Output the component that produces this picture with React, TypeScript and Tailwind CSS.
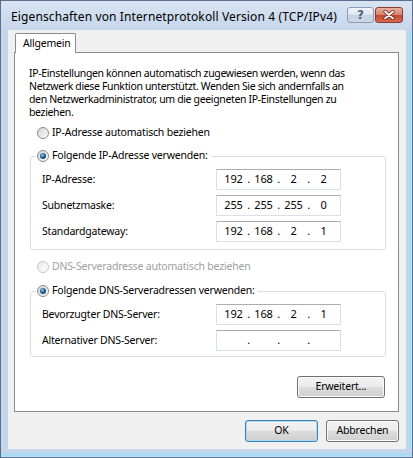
import React from "react";

function Radio({ checked, disabled, id }: { checked?: boolean; disabled?: boolean; id: string }) {
  return (
    <svg width="12" height="12" viewBox="0 0 12 12" className="shrink-0">
      <defs>
        <linearGradient id={`rf-${id}`} x1="0" y1="0" x2="1" y2="1">
          <stop offset="0" stopColor={disabled ? "#e8e8e8" : "#d2d2d2"} />
          <stop offset="1" stopColor="#ffffff" />
        </linearGradient>
        <radialGradient id={`rd-${id}`} cx="0.4" cy="0.35" r="0.7">
          <stop offset="0" stopColor="#8fd0f4" />
          <stop offset="0.5" stopColor="#2b6ea6" />
          <stop offset="1" stopColor="#0e2f52" />
        </radialGradient>
      </defs>
      <circle cx="6" cy="6" r="5.5" fill={`url(#rf-${id})`} stroke={disabled ? "#c6c6c6" : "#8a8a8a"} strokeWidth="1" />
      {checked && <circle cx="6" cy="6" r="3" fill={`url(#rd-${id})`} />}
    </svg>
  );
}

function IpField({ v }: { v: string[] }) {
  return (
    <div className="w-[125px] h-[21px] bg-white border border-[#dbdfe6] border-t-[#abadb3] flex items-center pl-[4px] shrink-0 text-[11px]">
      {v.map((o, i) => (
        <React.Fragment key={i}>
          {i > 0 && <span className="w-[5px] text-center">.</span>}
          <span className="w-[25px] text-center">{o}</span>
        </React.Fragment>
      ))}
    </div>
  );
}

function Row({ label, v }: { label: string; v: string[] }) {
  return (
    <div className="flex items-center h-[21px] pl-[6px]">
      <span className="w-[174px] shrink-0">{label}</span>
      <IpField v={v} />
    </div>
  );
}

function Btn({ children, def, w }: { children: React.ReactNode; def?: boolean; w: string }) {
  return (
    <div
      className={`${w} h-[22px] rounded-[3px] border flex items-center justify-center bg-[linear-gradient(#f2f2f2_0%,#ebebeb_50%,#dddddd_50%,#cfcfcf_100%)] ${
        def
          ? "border-[#3c7fb1] shadow-[inset_0_0_0_1px_#a9dcf3]"
          : "border-[#707070] shadow-[inset_0_0_0_1px_#fbfbfb]"
      }`}
    >
      {children}
    </div>
  );
}

export default function App() {
  return (
    <div className="w-[413px] h-[458px] border border-[#5b6f8e] bg-[#c4d5ec] flex flex-col [font-family:'Noto_Sans',sans-serif] text-[10.5px] tracking-[-0.2px] text-black overflow-hidden">
      {/* Title bar */}
      <div className="h-[29px] flex shrink-0 bg-[linear-gradient(#d9e4f2,#c6d6ec)]">
        <div className="mt-[9px] ml-[10px] text-[12px] tracking-[0.12px] leading-[14px] text-black">
          Eigenschaften von Internetprotokoll Version 4 (TCP/IPv4)
        </div>
        <div className="flex-1" />
        <div className="mt-[6px] mr-[9px] flex gap-[1px]">
          <div className="w-[27px] h-[16px] rounded-[3px] border border-[#8a9cb6] bg-[linear-gradient(#f1f5fa_0%,#dbe4ef_50%,#c5d2e3_50%,#cdd9e8_100%)] flex items-center justify-center">
            <span className="text-[12px] font-bold leading-none text-[#4f6179] [font-family:'DejaVu_Sans',sans-serif]">?</span>
          </div>
          <div className="w-[28px] h-[16px] rounded-[3px] border border-[#8d3a2d] bg-[linear-gradient(#eab0a2_0%,#d8806b_50%,#c5452d_50%,#d66a4f_100%)] flex items-center justify-center">
            <svg width="12" height="10" viewBox="0 0 12 10">
              <path d="M2 1.5 L10 8.5 M10 1.5 L2 8.5" stroke="#5a1a10" strokeWidth="3.2" strokeLinecap="round" />
              <path d="M2 1.5 L10 8.5 M10 1.5 L2 8.5" stroke="#ffffff" strokeWidth="1.8" strokeLinecap="round" />
            </svg>
          </div>
        </div>
      </div>

      <div className="flex flex-1">
        <div className="w-[7px] shrink-0 bg-[#c4d5ec]" />
        {/* Body */}
        <div className="w-[398px] shrink-0 bg-[#f0f0f0] flex flex-col pt-[3px]">
          {/* Tab */}
          <div className="flex">
            <div className="ml-[7px] w-[61px] h-[20px] -mb-px relative z-10 bg-white border border-b-0 border-[#898c95] rounded-t-[2px] flex items-center pl-[7px]">
              Allgemein
            </div>
          </div>
          {/* Panel */}
          <div className="ml-[6px] w-[385px] h-[360px] bg-white border border-[#898c95] flex flex-col">
            <p className="pl-[14px] pt-[14px] leading-[13px] tracking-[-0.35px]">
              IP-Einstellungen können automatisch zugewiesen werden, wenn das
              <br />
              Netzwerk diese Funktion unterstützt. Wenden Sie sich andernfalls an
              <br />
              den Netzwerkadministrator, um die geeigneten IP-Einstellungen zu
              <br />
              beziehen.
            </p>

            <div className="mt-[6px] h-[16px] pl-[22px] flex items-center gap-[3px]">
              <Radio id="a" />
              <span>IP-Adresse automatisch beziehen</span>
            </div>

            <fieldset className="mt-[7px] ml-[15px] w-[356px] border border-[#d5dfe5] rounded-[3px] pl-[5px] pb-[7px]">
              <legend className="h-[16px] px-[1px] pr-[3px]">
                <span className="flex items-center gap-[3px] h-[16px]">
                  <Radio id="b" checked />
                  <span>Folgende IP-Adresse verwenden:</span>
                </span>
              </legend>
              <div className="pt-[5px] flex flex-col gap-[5px]">
                <Row label="IP-Adresse:" v={["192", "168", "2", "2"]} />
                <Row label="Subnetzmaske:" v={["255", "255", "255", "0"]} />
                <Row label="Standardgateway:" v={["192", "168", "2", "1"]} />
              </div>
            </fieldset>

            <div className="mt-[9px] h-[16px] pl-[22px] flex items-center gap-[3px] text-[#a0a0a0]">
              <Radio id="c" disabled />
              <span>DNS-Serveradresse automatisch beziehen</span>
            </div>

            <fieldset className="mt-[8px] ml-[15px] w-[356px] border border-[#d5dfe5] rounded-[3px] pl-[5px] pb-[5px]">
              <legend className="h-[16px] px-[1px] pr-[3px]">
                <span className="flex items-center gap-[3px] h-[16px]">
                  <Radio id="d" checked />
                  <span>Folgende DNS-Serveradressen verwenden:</span>
                </span>
              </legend>
              <div className="pt-[5px] flex flex-col gap-[5px]">
                <Row label="Bevorzugter DNS-Server:" v={["192", "168", "2", "1"]} />
                <Row label="Alternativer DNS-Server:" v={["", "", "", ""]} />
              </div>
            </fieldset>

            <div className="mt-[19px] flex justify-end pr-[13px]">
              <Btn w="w-[88px]">Erweitert...</Btn>
            </div>
          </div>
          {/* Buttons */}
          <div className="mt-[8px] flex justify-end gap-[8px] pr-[7px]">
            <Btn w="w-[73px]" def>
              OK
            </Btn>
            <Btn w="w-[73px]">Abbrechen</Btn>
          </div>
        </div>
        <div className="flex-1 bg-[linear-gradient(to_right,#c4d5ec_0%,#c4d5ec_40%,#9edbf3_70%,#c4e6f6_100%)]" />
      </div>
      <div className="h-[8px] shrink-0 bg-[linear-gradient(#c4d5ec_0%,#c4d5ec_40%,#9edbf3_75%,#c4e6f6_100%)]" />
    </div>
  );
}
